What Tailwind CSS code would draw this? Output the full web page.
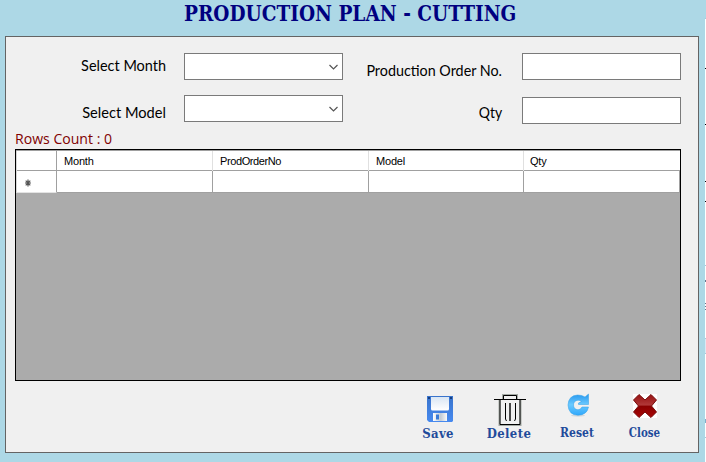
<!DOCTYPE html>
<html lang="en">
<head>
<meta charset="utf-8">
<title>Production Plan - Cutting</title>
<script src="https://cdn.jsdelivr.net/npm/@tailwindcss/browser@4"></script>
</head>
<body class="w-[706px] h-[462px] overflow-hidden bg-[#add8e6] relative text-black">
<header class="h-9 pl-[184px] pt-px">
  <h1 class="w-fit whitespace-nowrap origin-left scale-x-[0.936] text-[22px] leading-6 font-bold text-[#000080] font-['DejaVu_Serif_Condensed','DejaVu_Serif',serif]">PRODUCTION PLAN - CUTTING</h1>
</header>
<main class="ml-[5px] w-[694px] h-[417px] border border-[#646464] bg-[#f0f0f0] flex flex-col">
  <form class="pt-4 h-[93px] flex font-['Lato',sans-serif] text-[15px] leading-[18px] whitespace-nowrap">
    <div class="w-[160px] flex flex-col items-end pt-[3px]">
      <label class="origin-right scale-x-[0.965]">Select Month</label>
      <label class="mt-[29px] origin-right scale-x-[0.975]">Select Model</label>
    </div>
    <div class="ml-[18px] w-[159px] flex flex-col gap-[15px]">
      <div class="h-[27px] border border-[#7a7a7a] bg-white flex items-center justify-end pr-1"><svg width="9" height="6" viewBox="0 0 9 6" fill="none" stroke="#555" stroke-width="1.2"><path d="M.5 1 4.500 5 8.500 1"/></svg></div>
      <div class="h-[27px] border border-[#7a7a7a] bg-white flex items-center justify-end pr-1"><svg width="9" height="6" viewBox="0 0 9 6" fill="none" stroke="#555" stroke-width="1.2"><path d="M.5 1 4.500 5 8.500 1"/></svg></div>
    </div>
    <div class="w-[159px] flex flex-col items-end pt-[8px]">
      <label class="origin-right scale-x-[0.955]">Production Order No.</label>
      <label class="mt-6 origin-right scale-x-[0.93]">Qty</label>
    </div>
    <div class="ml-5 w-[159px] flex flex-col gap-[17px]">
      <input class="h-[27px] w-full border border-[#7a7a7a] bg-white">
      <input class="h-[27px] w-full border border-[#7a7a7a] bg-white">
    </div>
  </form>
  <p class="ml-[9px] h-[19px] w-fit origin-left scale-x-[0.97] text-[14.5px] leading-[18px] text-[#800000] font-['Open_Sans',sans-serif]">Rows Count : 0</p>
  <section class="ml-[9px] w-[666px] h-[232px] border border-black bg-[#ababab] font-['Liberation_Sans',sans-serif] text-[11px]">
    <div class="h-[21px] border-y border-[#a0a0a0] bg-white grid grid-cols-[41px_156px_156px_155px_156px] items-stretch leading-[20px]">
      <div class="border-r border-[#a0a0a0] border-l border-l-[#d8d8d8]"></div>
      <div class="border-r border-[#e0e0e0] pl-[7px] tracking-[-0.2px]">Month</div>
      <div class="border-r border-[#e0e0e0] pl-[7px] tracking-[-0.4px]">ProdOrderNo</div>
      <div class="border-r border-[#e0e0e0] pl-[7px] tracking-[-0.2px]">Model</div>
      <div class="pl-[6px] tracking-[-0.2px]">Qty</div>
    </div>
    <div class="h-[22px] bg-white grid grid-cols-[41px_156px_156px_155px_156px]">
      <div class="border-r border-r-[#a0a0a0] border-b border-b-[#e3e3e3] border-l border-l-[#d8d8d8] pl-[7px] pt-[8px]"><svg width="8" height="8" viewBox="0 0 8 8" stroke="#555" stroke-width="1.200"><path d="M4 .5v7M1 4h6M1.700 1.700l4.600 4.600M6.300 1.700l-4.600 4.600"/></svg></div>
      <div class="border-r border-b border-[#a0a0a0]"></div>
      <div class="border-r border-b border-[#a0a0a0]"></div>
      <div class="border-r border-b border-[#a0a0a0]"></div>
      <div class="border-r border-b border-[#a0a0a0]"></div>
    </div>
  </section>
  <nav class="flex ml-[405px] h-[70px] pt-[11px] text-[#1f4b9b] font-bold font-['DejaVu_Serif_Condensed','DejaVu_Serif',serif] whitespace-nowrap">
    <button class="w-[54px] h-[54px] flex flex-col items-center font-bold">
      <svg class="mt-[3px] ml-[4px] shrink-0" width="26" height="27" viewBox="0 0 26 27"><defs><linearGradient id="disk" x2="0" y2="1"><stop stop-color="#3973cb"/><stop offset="1" stop-color="#478af0"/></linearGradient><linearGradient id="paper" x2="0" y2="1"><stop stop-color="#d9e6f4"/><stop offset="1" stop-color="#fff"/></linearGradient><linearGradient id="metal" x2="1"><stop stop-color="#fff"/><stop offset=".55" stop-color="#c2cbd5"/><stop offset="1" stop-color="#fafafa"/></linearGradient></defs><path d="M0 1h26v25l-1 1H2l-2-2z" fill="url(#disk)"/><path d="M4 2h18v12q0 1.500-1.500 1.500h-15Q4 15.500 4 14z" fill="url(#paper)"/><path d="M1 2h2v2H1zM23 2h2v2h-2z" fill="#173f80"/><path d="M6 18h14v8H6z" fill="url(#metal)"/><path d="M9 19.500h3v5H9z" fill="#397ad7"/></svg>
      <span class="mt-[4px] tracking-[0.35px] text-[13px] leading-[16px]">Save</span>
    </button>
    <button class="ml-[16px] w-[56px] h-[54px] flex flex-col items-center font-bold">
      <svg class="mt-[2px] ml-[2px] shrink-0" width="32" height="32" viewBox="0 0 32 32" fill="none" stroke="#000"><path d="M5.500 5v26h21V5M9 5V1h14v4" stroke="#a4aaa4" stroke-width="2"/><path d="M0 5.500h32M9.500 5V1.500h13V5M6 6v24.500h20V6"/><path d="M16 9v18" stroke="#484848" stroke-width="2"/><path d="M11.500 9v16l1 2M21.500 9v16l-1 2"/></svg>
      <span class="tracking-[0.4px] text-[13px] leading-[16px]">Delete</span>
    </button>
    <button class="ml-[14px] w-[52px] h-[54px] flex flex-col items-center font-bold">
      <svg class="mt-[1px] ml-[1px] shrink-0" width="24" height="25" viewBox="0 0 24 25"><defs><linearGradient id="reload" x2="0" y2="1"><stop stop-color="#2797ee"/><stop offset=".5" stop-color="#6bcaff"/><stop offset="1" stop-color="#2fa7fb"/></linearGradient></defs><ellipse cx="12" cy="22.500" rx="7" ry="1.200" fill="#d2d8dc"/><path d="M22.500 1v10.500H12.500v-1.500l3-1.500q-1.500-1.300-3.500-1.300Q7.500 7.700 7.500 12t4.500 4.800q2.500 0 4-2.800h6.500Q21 22 12 22.300 2.500 22 2 12 2.500 2.500 11.500 2q4.500 0 7.500 2z" fill="url(#reload)" stroke="#2d9ee8" stroke-width=".5"/></svg>
      <span class="mt-[7px] text-[12px] leading-[16px]">Reset</span>
    </button>
    <button class="ml-[15px] w-[52px] h-[54px] flex flex-col items-center font-bold">
      <svg class="mt-[2px] ml-[2px] bg-white shrink-0" width="24" height="24" viewBox="0 0 24 24"><defs><linearGradient id="cross" x2="0" y2="1"><stop stop-color="#961010"/><stop offset=".45" stop-color="#b03838"/><stop offset=".52" stop-color="#8b0000"/><stop offset="1" stop-color="#a80606"/></linearGradient></defs><path d="M6 .5 12 6l6-5.500L23.500 6 18.500 12l5 6-5.500 5.500-6-5.500-6 5.500L.5 18l5-6-5-6z" fill="url(#cross)" stroke="#760b0b" stroke-linejoin="round"/></svg>
      <span class="mt-[7px] ml-px text-[12px] leading-[16px] scale-x-[0.95]">Close</span>
    </button>
  </nav>
</main>
<svg class="absolute left-[705px] top-0" width="1" height="462" viewBox="0 0 1 462"><path d="M0 19h1v443H0z" fill="#fff"/><path d="M0 68h1v1H0zM0 124h1v1H0zM0 181h1v1H0zM0 201h1v1H0z"/><path d="M0 18h1v1H0zM0 265h1v1H0zM0 338h1v1H0zM0 353h1v1H0zM0 437h1v1H0z" fill="#a8c8d8"/><path d="M0 280h1v2H0zM0 303h1v1H0zM0 306h1v1H0zM0 309h1v1H0z" fill="#65778c"/><path d="M0 339h1v14H0z" fill="#dce8f4"/><path d="M0 419h1v4H0z" fill="#7faec8"/></svg>
</body>
</html>
